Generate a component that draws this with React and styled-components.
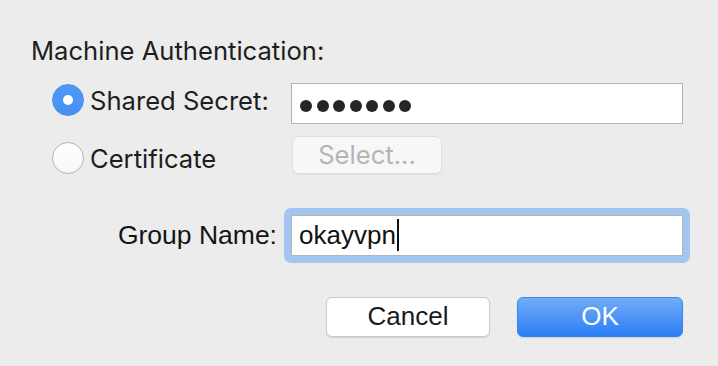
import React from "react";
import styled, { createGlobalStyle } from "styled-components";

const Global = createGlobalStyle`
  html, body { margin: 0; padding: 0; background: #ececec; }
  * { box-sizing: border-box; }
`;

const Dialog = styled.div`
  width: 718px;
  height: 366px;
  background: #ececec;
  padding: 36px 28px 0 31px;
  font-family: "Liberation Sans", Arial, sans-serif;
  color: #1f1f1f;
`;

const Title = styled.div`
  font-family: Inter, "Liberation Sans", sans-serif;
  font-size: 25.6px;
  line-height: 30px;
  color: #1e1e1e;
`;

const Options = styled.div`
  margin: 17px 0 0 21px;
  display: grid;
  grid-template-columns: 239px 392px;
  row-gap: 12px;
  align-items: start;
`;

const Option = styled.label`
  display: flex;
  align-items: center;
  gap: 6px;
  height: 32px;
  margin-top: ${(p) => p.$offset}px;
  font-family: Inter, "Liberation Sans", sans-serif;
  font-size: 25.6px;
  color: #1e1e1e;
`;

const Radio = styled.span`
  flex: none;
  width: 32px;
  height: 32px;
  border-radius: 50%;
  display: flex;
  align-items: center;
  justify-content: center;
  background: ${(p) => (p.$checked ? "linear-gradient(#5099f7, #4790f3)" : "linear-gradient(#ffffff, #f8f8f8)")};
  border: 1px solid ${(p) => (p.$checked ? "#4790f2" : "#b4b4b4")};
  &::after {
    content: "";
    display: ${(p) => (p.$checked ? "block" : "none")};
    width: 10px;
    height: 10px;
    border-radius: 50%;
    background: #fff;
  }
`;

const PasswordField = styled.div`
  height: 41px;
  background: #fff;
  border: 1px solid #b5b5b5;
  display: flex;
  align-items: center;
  gap: 4.5px;
  padding: 5px 0 0 8px;
`;

const Dot = styled.span`
  width: 12px;
  height: 12px;
  border-radius: 50%;
  background: #262626;
`;

const SelectButton = styled.button`
  width: 150px;
  height: 38px;
  margin-left: 1px;
  border: 1px solid #dedede;
  border-radius: 6px;
  background: #f7f7f7;
  box-shadow: 0 1px 1px rgba(0, 0, 0, 0.05);
  font-family: Inter, "Liberation Sans", sans-serif;
  font-size: 25.6px;
  color: #b4b4b4;
  padding: 0 0 2px;
`;

const GroupRow = styled.div`
  margin-top: 34px;
  display: flex;
  align-items: center;
`;

const GroupLabel = styled.div`
  width: 248px;
  text-align: right;
  font-size: 26.5px;
  color: #141414;
  padding-right: 2px;
`;

const FocusRing = styled.div`
  margin-left: 5px;
  padding: 7px;
  width: 406px;
  border-radius: 7px;
  background: #a3c5f1;
`;

const TextField = styled.div`
  height: 41px;
  background: #fff;
  border: 1px solid #b5b5b5;
  display: flex;
  align-items: center;
  padding: 0 0 1px 7px;
  font-size: 26px;
  color: #111;
`;

const Caret = styled.span`
  width: 2px;
  height: 32px;
  background: #111;
  margin-left: 1px;
`;

const Buttons = styled.div`
  margin-top: 34px;
  display: flex;
  justify-content: flex-end;
  gap: 27px;
  padding-right: 7px;
`;

const Button = styled.button`
  width: ${(p) => (p.$primary ? 166 : 164)}px;
  height: 40px;
  border-radius: 6px;
  font-family: "Liberation Sans", Arial, sans-serif;
  font-size: 26px;
  padding: 0 0 1px;
  color: ${(p) => (p.$primary ? "#fff" : "#1a1a1a")};
  border: 1px solid ${(p) => (p.$primary ? "#3a84f0" : "#cacaca")};
  background: ${(p) => (p.$primary ? "linear-gradient(#71adf8, #2b7df5)" : "#fff")};
  box-shadow: 0 1px 1px rgba(0, 0, 0, 0.12);
`;

export default function App() {
  return (
    <>
      <Global />
      <Dialog>
        <Title>Machine Authentication:</Title>
        <Options>
          <Option $offset={1}>
            <Radio $checked />
            Shared Secret:
          </Option>
          <PasswordField>
            {Array.from({ length: 7 }).map((_, i) => (
              <Dot key={i} />
            ))}
          </PasswordField>
          <Option $offset={6}>
            <Radio />
            Certificate
          </Option>
          <SelectButton disabled>Select...</SelectButton>
        </Options>
        <GroupRow>
          <GroupLabel>Group Name:</GroupLabel>
          <FocusRing>
            <TextField>
              okayvpn
              <Caret />
            </TextField>
          </FocusRing>
        </GroupRow>
        <Buttons>
          <Button>Cancel</Button>
          <Button $primary>OK</Button>
        </Buttons>
      </Dialog>
    </>
  );
}
